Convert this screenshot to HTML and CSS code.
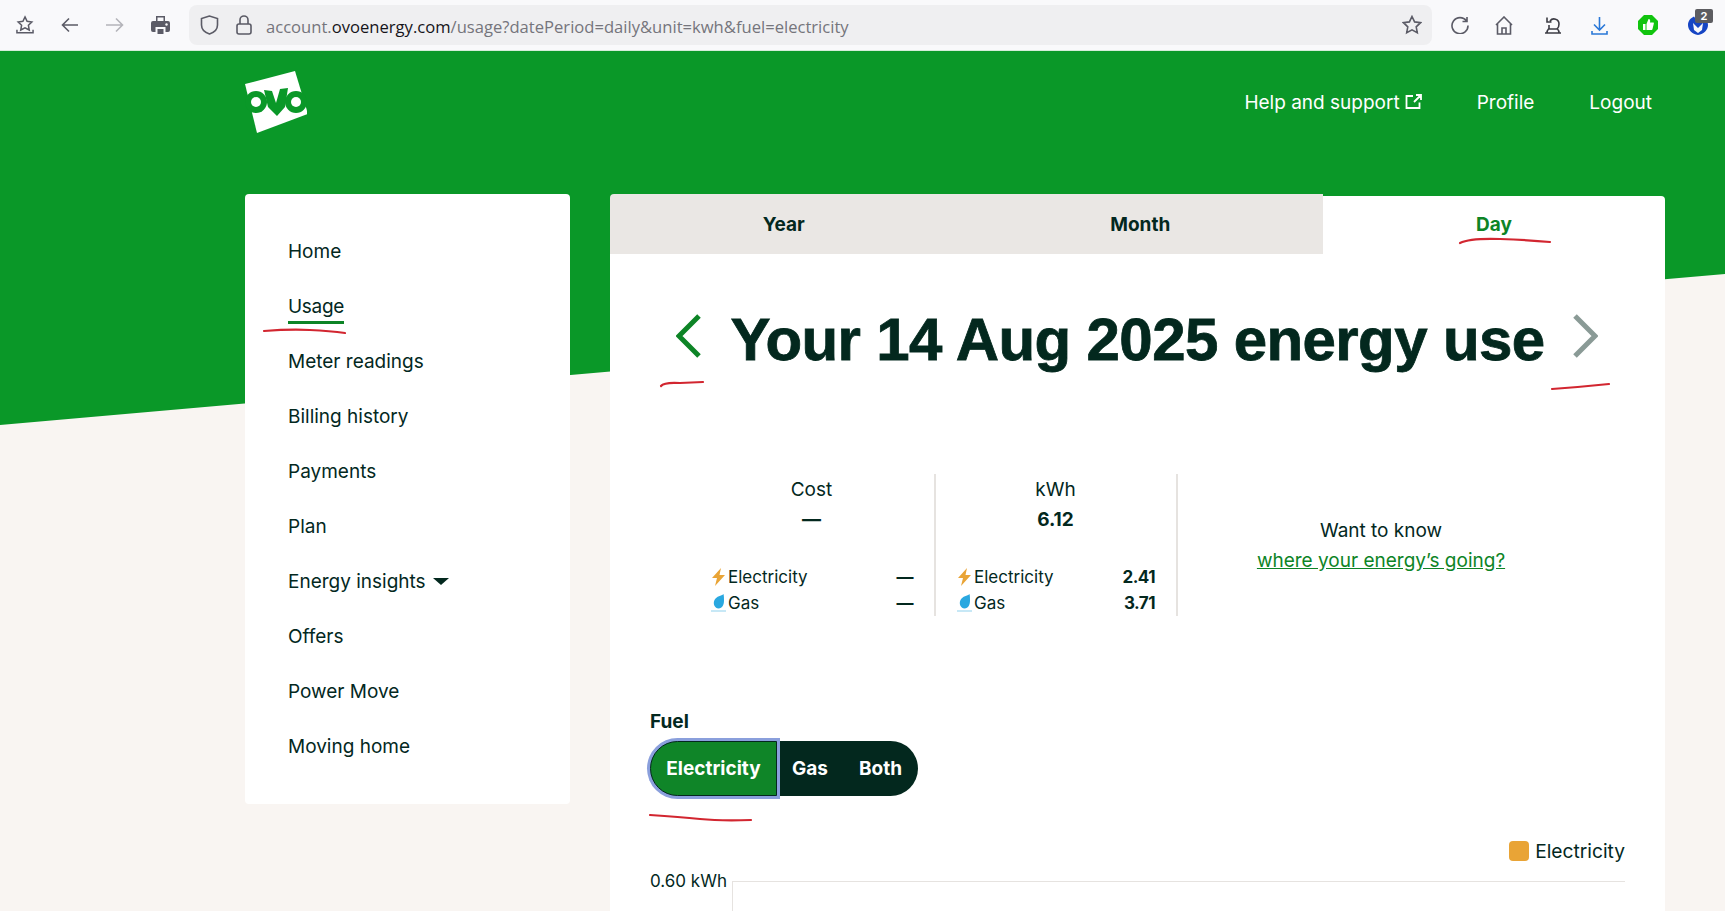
FILE: index.html
```html
<!DOCTYPE html>
<html>
<head>
  <title>Usage - OVO Energy</title>
  <link rel="stylesheet" href="styles.css">
</head>
<body>
  <div class="page">
    <div class="hero-bg"></div>

    <div class="browser-bar">
      <svg class="ico save" width="18" height="20" viewBox="0 0 19 20"><path d="M9.500 1.500l2.200 4.600 5 .7-3.600 3.500.9 5-4.500-2.400-4.500 2.400.9-5-3.600-3.500 5-.7zM1 15v3.200h17V15"/></svg>
      <svg class="ico back" width="18" height="16" viewBox="0 0 18 16"><path d="M17 8H1.500M8 1.500L1.500 8 8 14.500"/></svg>
      <svg class="ico forward" width="19" height="16" viewBox="0 0 19 16"><path d="M1 8h16.500M11 1.500L17.500 8 11 14.500"/></svg>
      <svg class="print" width="19" height="20" viewBox="0 0 19 20"><path d="M5 1h9v5h3a2 2 0 0 1 2 2v7a2 2 0 0 1-2 2h-2.500v-5h-10v5H2a2 2 0 0 1-2-2V8a2 2 0 0 1 2-2h3z" fill="#5b5b66"/><path d="M6.500 14h6v5h-6z" fill="#5b5b66"/><circle cx="15.500" cy="9.500" r="1.200" fill="#f9f9fb"/><path d="M6.500 2.500h6V6h-6z" fill="#f9f9fb"/></svg>
      <div class="url-bar">
        <svg class="ico shield" width="19" height="20" viewBox="0 0 19 20"><path d="M9.500 1L1.500 3.500V10c0 4.500 3.500 7.500 8 9 4.500-1.500 8-4.500 8-9V3.500z"/></svg>
        <svg class="ico lock" width="16" height="20" viewBox="0 0 16 20"><rect x="1" y="9" width="14" height="10" rx="2"/><path d="M4 9V5a4 4 0 0 1 8 0v4"/></svg>
        <div class="url-text">account.<span class="url-host">ovoenergy.com</span>/usage?datePeriod=daily&amp;unit=kwh&amp;fuel=electricity</div>
        <svg class="ico url-star" width="20" height="20" viewBox="0 0 20 20"><path d="M10 1.500l2.600 5.400 5.900.8-4.300 4.100 1.100 5.900L10 14.900l-5.300 2.800 1.100-5.900L1.500 7.700l5.900-.8z"/></svg>
      </div>
      <svg class="ico reload" width="18" height="18" viewBox="0 0 18 18"><path d="M15.500 5A8 8 0 1 0 17 9.500M16 1v4.500h-4.500"/></svg>
      <svg class="ico home" width="18" height="19" viewBox="0 0 18 19"><path d="M1 9l8-8 8 8M2.500 7.500V18h13V7.500M7 18v-6h4v6"/></svg>
      <svg class="ico wizard" width="18" height="18" viewBox="0 0 18 18"><path d="M1 17h16M3 17c0-2 .5-3 1.500-4h9c1 1 1.500 2 1.500 4M5 13V9M13 13c2-1.500 2-3 2-5a5 5 0 0 0-9-3M3 1.500V6h4.500"/></svg>
      <svg class="ico download" width="17" height="19" viewBox="0 0 17 19"><path d="M8.500 1v12.500M3 8.500l5.500 5.500L14 8.500M1 15v3h15v-3"/></svg>
      <svg class="thumb" width="20" height="20" viewBox="0 0 20 20"><path d="M6 0h8l6 6v8l-6 6H6l-6-6V6z" fill="#11c40f"/><path d="M5 9h2.500v6H5zM8.500 9l2-5c1.500 0 2 1 1.500 3.500h3c.8 0 1 .6.800 1.200l-1.300 5.300c-.1.600-.6 1-1.200 1H8.500z" fill="#fff"/></svg>
      <div class="malware">
        <svg width="20" height="20" viewBox="0 0 20 20"><path d="M6 1.500C2.500 3 0 6 0 10c0 5 4 9 10 10 6-1 10-5 10-10 0-4-2.500-7-6-8.500L10 7z" fill="#1645c4"/><path d="M5 8l5 5 5-5-1 7-4 3-4-3z" fill="#f9f9fb"/></svg>
        <span class="badge">2</span>
      </div>
    </div>

    <div class="site-header">
      <svg class="logo" width="62" height="62" viewBox="10 9 62 62">
        <path d="M10 22L60 9l13 43-51 19z" fill="#fff"/>
        <circle cx="21" cy="40" r="11" fill="#0a9828"/>
        <circle cx="21" cy="40" r="5" fill="#fff"/>
        <path d="M29 28l8 1 4 12 4-14 8-1-3 19-8 9-9-9z" fill="#0a9828"/>
        <circle cx="61" cy="40" r="11" fill="#0a9828"/>
        <circle cx="61" cy="40" r="5" fill="#fff"/>
      </svg>
      <nav class="top-nav">
        <a class="help-link">Help and support
          <svg class="ext" width="17" height="15" viewBox="0 0 17 15"><path d="M8 2H1.500v12h13V8.500M9 8l7-7M11 1h5v5"/></svg>
        </a>
        <a>Profile</a>
        <a>Logout</a>
      </nav>
    </div>

    <div class="content">
      <aside class="sidebar">
        <a class="side-item">Home</a>
        <a class="side-item"><span class="current">Usage</span></a>
        <a class="side-item">Meter readings</a>
        <a class="side-item">Billing history</a>
        <a class="side-item">Payments</a>
        <a class="side-item">Plan</a>
        <a class="side-item">Energy insights <span class="caret"></span></a>
        <a class="side-item">Offers</a>
        <a class="side-item">Power Move</a>
        <a class="side-item">Moving home</a>
      </aside>

      <main class="main">
        <div class="tabs">
          <div class="tab">Year</div>
          <div class="tab">Month</div>
          <div class="tab tab-active">Day</div>
        </div>

        <div class="card-body">
          <div class="title-row">
            <svg class="chevron" width="25" height="44" viewBox="0 0 25 44"><path d="M23 2L3 22l20 20" stroke="#0d8426"/></svg>
            <h1>Your 14 Aug 2025 energy use</h1>
            <svg class="chevron" width="25" height="44" viewBox="0 0 25 44"><path d="M2 2l20 20L2 42" stroke="#8a9a96"/></svg>
          </div>

          <div class="stats">
            <div class="stat">
              <div class="stat-title">Cost</div>
              <div class="stat-total">—</div>
              <div class="stat-row">
                <span class="fuel-name"><svg class="bolt" width="13" height="18" viewBox="0 0 13 18"><path d="M9 0L0 10h5l-2 8 10-11H7.500z"/></svg>Electricity</span>
                <b>—</b>
              </div>
              <div class="stat-row">
                <span class="fuel-name"><svg class="flame" width="15" height="18" viewBox="0 0 15 18"><path d="M12.500 0C10.500 2 5.500 2 3.500 6c-2 4 .5 8.500 4 8.500 4 0 5.500-4 5.500-8 0-2.500 0-4.500-.5-6.500z" fill="#2aa8e0"/><path d="M0 17h15" stroke="#b5e0f3" stroke-width="1.500"/></svg>Gas</span>
                <b>—</b>
              </div>
            </div>
            <div class="stat">
              <div class="stat-title">kWh</div>
              <div class="stat-total">6.12</div>
              <div class="stat-row">
                <span class="fuel-name"><svg class="bolt" width="13" height="18" viewBox="0 0 13 18"><path d="M9 0L0 10h5l-2 8 10-11H7.500z"/></svg>Electricity</span>
                <b>2.41</b>
              </div>
              <div class="stat-row">
                <span class="fuel-name"><svg class="flame" width="15" height="18" viewBox="0 0 15 18"><path d="M12.500 0C10.500 2 5.500 2 3.500 6c-2 4 .5 8.500 4 8.500 4 0 5.500-4 5.500-8 0-2.500 0-4.500-.5-6.500z" fill="#2aa8e0"/><path d="M0 17h15" stroke="#b5e0f3" stroke-width="1.500"/></svg>Gas</span>
                <b>3.71</b>
              </div>
            </div>
            <div class="know-more">
              <div>Want to know</div>
              <a>where your energy’s going?</a>
            </div>
          </div>

          <div class="fuel-label">Fuel</div>
          <div class="toggle">
            <div class="toggle-btn toggle-on">Electricity</div>
            <div class="toggle-btn">Gas</div>
            <div class="toggle-btn">Both</div>
          </div>

          <div class="legend"><span class="swatch"></span>Electricity</div>

          <div class="chart">
            <div class="y-label">0.60 kWh</div>
            <div class="plot"></div>
          </div>
        </div>
      </main>
    </div>

    <!-- red pen marks drawn over the screenshot -->
    <svg class="marks" width="1725" height="911" viewBox="0 0 1725 911">
      <path d="M1460 243Q1470 238 1500 239T1550 242"/>
      <path d="M264 331Q290 329 310 330T345 333"/>
      <path d="M661 386Q664 382 680 383L703 382"/>
      <path d="M1552 389Q1580 387 1609 384"/>
      <path d="M650 815Q680 817 700 819T751 820"/>
    </svg>
  </div>
</body>
</html>
```

FILE: styles.css
```css
body {
  margin: 0;
  font-family: Inter, "Liberation Sans", sans-serif;
  color: #03281e;
}

a {
  color: inherit;
}

.page {
  position: relative;
  width: 1725px;
  height: 911px;
  overflow: hidden;
  background-color: #f9f5f2;
}

.hero-bg {
  position: absolute;
  top: 0;
  left: 0;
  width: 100%;
  height: 430px;
  background-color: #0a9828;
  clip-path: polygon(0 0, 100% 0, 100% 274px, 0 425px);
}

/* browser chrome */
.browser-bar {
  position: relative;
  display: flex;
  align-items: center;
  height: 50px;
  background-color: #f9f9fb;
  border-bottom: 1px solid #d5ecd8;
  padding-left: 16px;
}

.ico {
  fill: none;
  stroke: #5b5b66;
  stroke-width: 1.6;
  flex-shrink: 0;
}

.back {
  margin-left: 27px;
}

.forward {
  margin-left: 26px;
  stroke: #b4b4ba;
}

.print {
  margin-left: 27px;
  flex-shrink: 0;
}

.url-bar {
  display: flex;
  align-items: center;
  width: 1243px;
  height: 40px;
  margin-left: 19px;
  padding-left: 11px;
  box-sizing: border-box;
  background-color: #efeff1;
  border-radius: 8px;
}

.lock {
  margin-left: 17px;
}

.url-text {
  flex: 1;
  margin-left: 14px;
  padding-top: 2px;
  font-family: "Open Sans", sans-serif;
  font-size: 16.6px;
  color: #75757c;
  white-space: nowrap;
}

.url-host {
  color: #15141a;
}

.url-star {
  margin-right: 10px;
}

.reload {
  margin-left: 19px;
}

.home {
  margin-left: 26px;
}

.wizard {
  margin-left: 31px;
  stroke: #3c3c44;
}

.download {
  margin-left: 29px;
  stroke: #2a78d8;
}

.thumb {
  margin-left: 30px;
  flex-shrink: 0;
}

.malware {
  position: relative;
  margin-left: 30px;
  height: 20px;
}

.badge {
  position: absolute;
  top: -6px;
  left: 7px;
  width: 18px;
  height: 14px;
  background-color: #5c5c60;
  border-radius: 2px;
  color: #fff;
  font-size: 11px;
  font-weight: 700;
  line-height: 14px;
  text-align: center;
}

/* site header */
.site-header {
  position: relative;
  display: flex;
  justify-content: space-between;
  height: 143px;
  padding: 20px 73px 0 245px;
  box-sizing: border-box;
}

.top-nav {
  display: flex;
  gap: 55px;
  height: 24px;
  margin-top: 20px;
  color: #fff;
  font-size: 19px;
  line-height: 24px;
}

.help-link {
  display: flex;
  align-items: center;
  gap: 5px;
}

.ext {
  margin-top: -4px;
  fill: none;
  stroke: #fff;
  stroke-width: 1.8;
}

.content {
  position: relative;
  display: flex;
  gap: 40px;
  padding-left: 245px;
}

.sidebar {
  display: flex;
  flex-direction: column;
  width: 325px;
  height: 610px;
  padding: 30px 0 0 43px;
  box-sizing: border-box;
  background-color: #fff;
  border-radius: 4px;
}

.side-item {
  height: 55px;
  font-size: 19px;
  line-height: 55px;
}

.current {
  display: inline-block;
  line-height: 24px;
  letter-spacing: -0.3px;
  padding-bottom: 2px;
  border-bottom: 3px solid #0d8426;
}

.caret {
  display: inline-block;
  margin: 0 0 3px 2px;
  border-left: 8px solid transparent;
  border-right: 8px solid transparent;
  border-top: 7px solid #03281e;
}

.main {
  width: 1055px;
}

.tabs {
  display: flex;
}

.tab {
  width: 356.5px;
  height: 60px;
  padding-right: 9px;
  box-sizing: border-box;
  background-color: #eae7e4;
  font-size: 19px;
  font-weight: 700;
  line-height: 62px;
  text-align: center;
}

.tab:first-child {
  border-top-left-radius: 4px;
}

.tab-active {
  flex: 1;
  height: 58px;
  margin-top: 2px;
  padding-right: 0;
  background-color: #fff;
  color: #0d8426;
  line-height: 58px;
  border-top-right-radius: 4px;
}

.card-body {
  height: 660px;
  padding: 0 40px;
  background-color: #fff;
}

.title-row {
  display: flex;
  align-items: center;
  justify-content: center;
  gap: 29px;
  height: 70px;
  padding-top: 51px;
}

.chevron {
  fill: none;
  stroke-width: 5;
  margin-top: -8px;
  margin-left: -1px;
}

h1 {
  margin: 0 0 2px;
  font-family: "Liberation Sans", sans-serif;
  font-size: 60px;
  font-weight: 700;
  letter-spacing: -0.6px;
  -webkit-text-stroke: 0.8px #03281e;
  white-space: nowrap;
}

.stats {
  display: grid;
  grid-template-columns: 246px 242px 408px;
  height: 142px;
  margin: 99px 0 0 40px;
}

.stat {
  padding: 4px 21px 0 22px;
  border-right: 2px solid #e6e3e0;
  font-size: 19px;
  line-height: 24px;
  text-align: center;
}

.stat-title {
  margin-right: 2px;
}

.stat-total {
  margin: 6px 2px 32px 0;
  font-weight: 700;
}

.stat-row {
  display: flex;
  justify-content: space-between;
  align-items: center;
  height: 26px;
  font-size: 17px;
}

.stat-row b {
  letter-spacing: -0.5px;
}

.fuel-name {
  display: flex;
  align-items: center;
  gap: 3px;
}

.bolt {
  fill: #e9a436;
}

.flame {
  margin: 0 -1px;
}

.know-more {
  display: flex;
  flex-direction: column;
  justify-content: center;
  padding: 2px 2px 0 0;
  font-size: 19px;
  line-height: 30px;
  text-align: center;
}

.know-more a {
  color: #0d8426;
  text-decoration: underline;
}

.fuel-label {
  margin-top: 94px;
  font-size: 19px;
  font-weight: 700;
  line-height: 24px;
}

.toggle {
  display: flex;
  width: 268px;
  height: 55px;
  margin-top: 7px;
  background-color: #03281e;
  border-radius: 28px;
  color: #fff;
  font-size: 19px;
  font-weight: 700;
  line-height: 55px;
}

.toggle-btn {
  padding-left: 31px;
}

.toggle-on {
  width: 127px;
  padding-left: 0;
  box-sizing: border-box;
  background-color: #0f8528;
  border: 1px solid #03281e;
  border-radius: 28px 0 0 28px;
  box-shadow: 0 0 0 3px #8a9fdc;
  line-height: 53px;
  text-align: center;
}

.toggle-on + .toggle-btn {
  padding-left: 15px;
}

.legend {
  display: flex;
  align-items: center;
  justify-content: flex-end;
  gap: 6px;
  height: 22px;
  margin-top: 44px;
  font-size: 19.2px;
}

.swatch {
  width: 20px;
  height: 20px;
  background-color: #e9a436;
  border-radius: 4px;
}

.chart {
  display: flex;
  gap: 5px;
  margin-top: 7px;
}

.y-label {
  font-size: 17px;
  line-height: 24px;
}

.plot {
  flex: 1;
  height: 100px;
  margin-top: 12px;
  border-top: 1px solid #e6e3e0;
  border-left: 1px solid #e6e3e0;
}

.marks {
  position: absolute;
  top: 0;
  left: 0;
  fill: none;
  stroke: #d22630;
  stroke-width: 2.2;
  stroke-linecap: round;
  pointer-events: none;
}
```
